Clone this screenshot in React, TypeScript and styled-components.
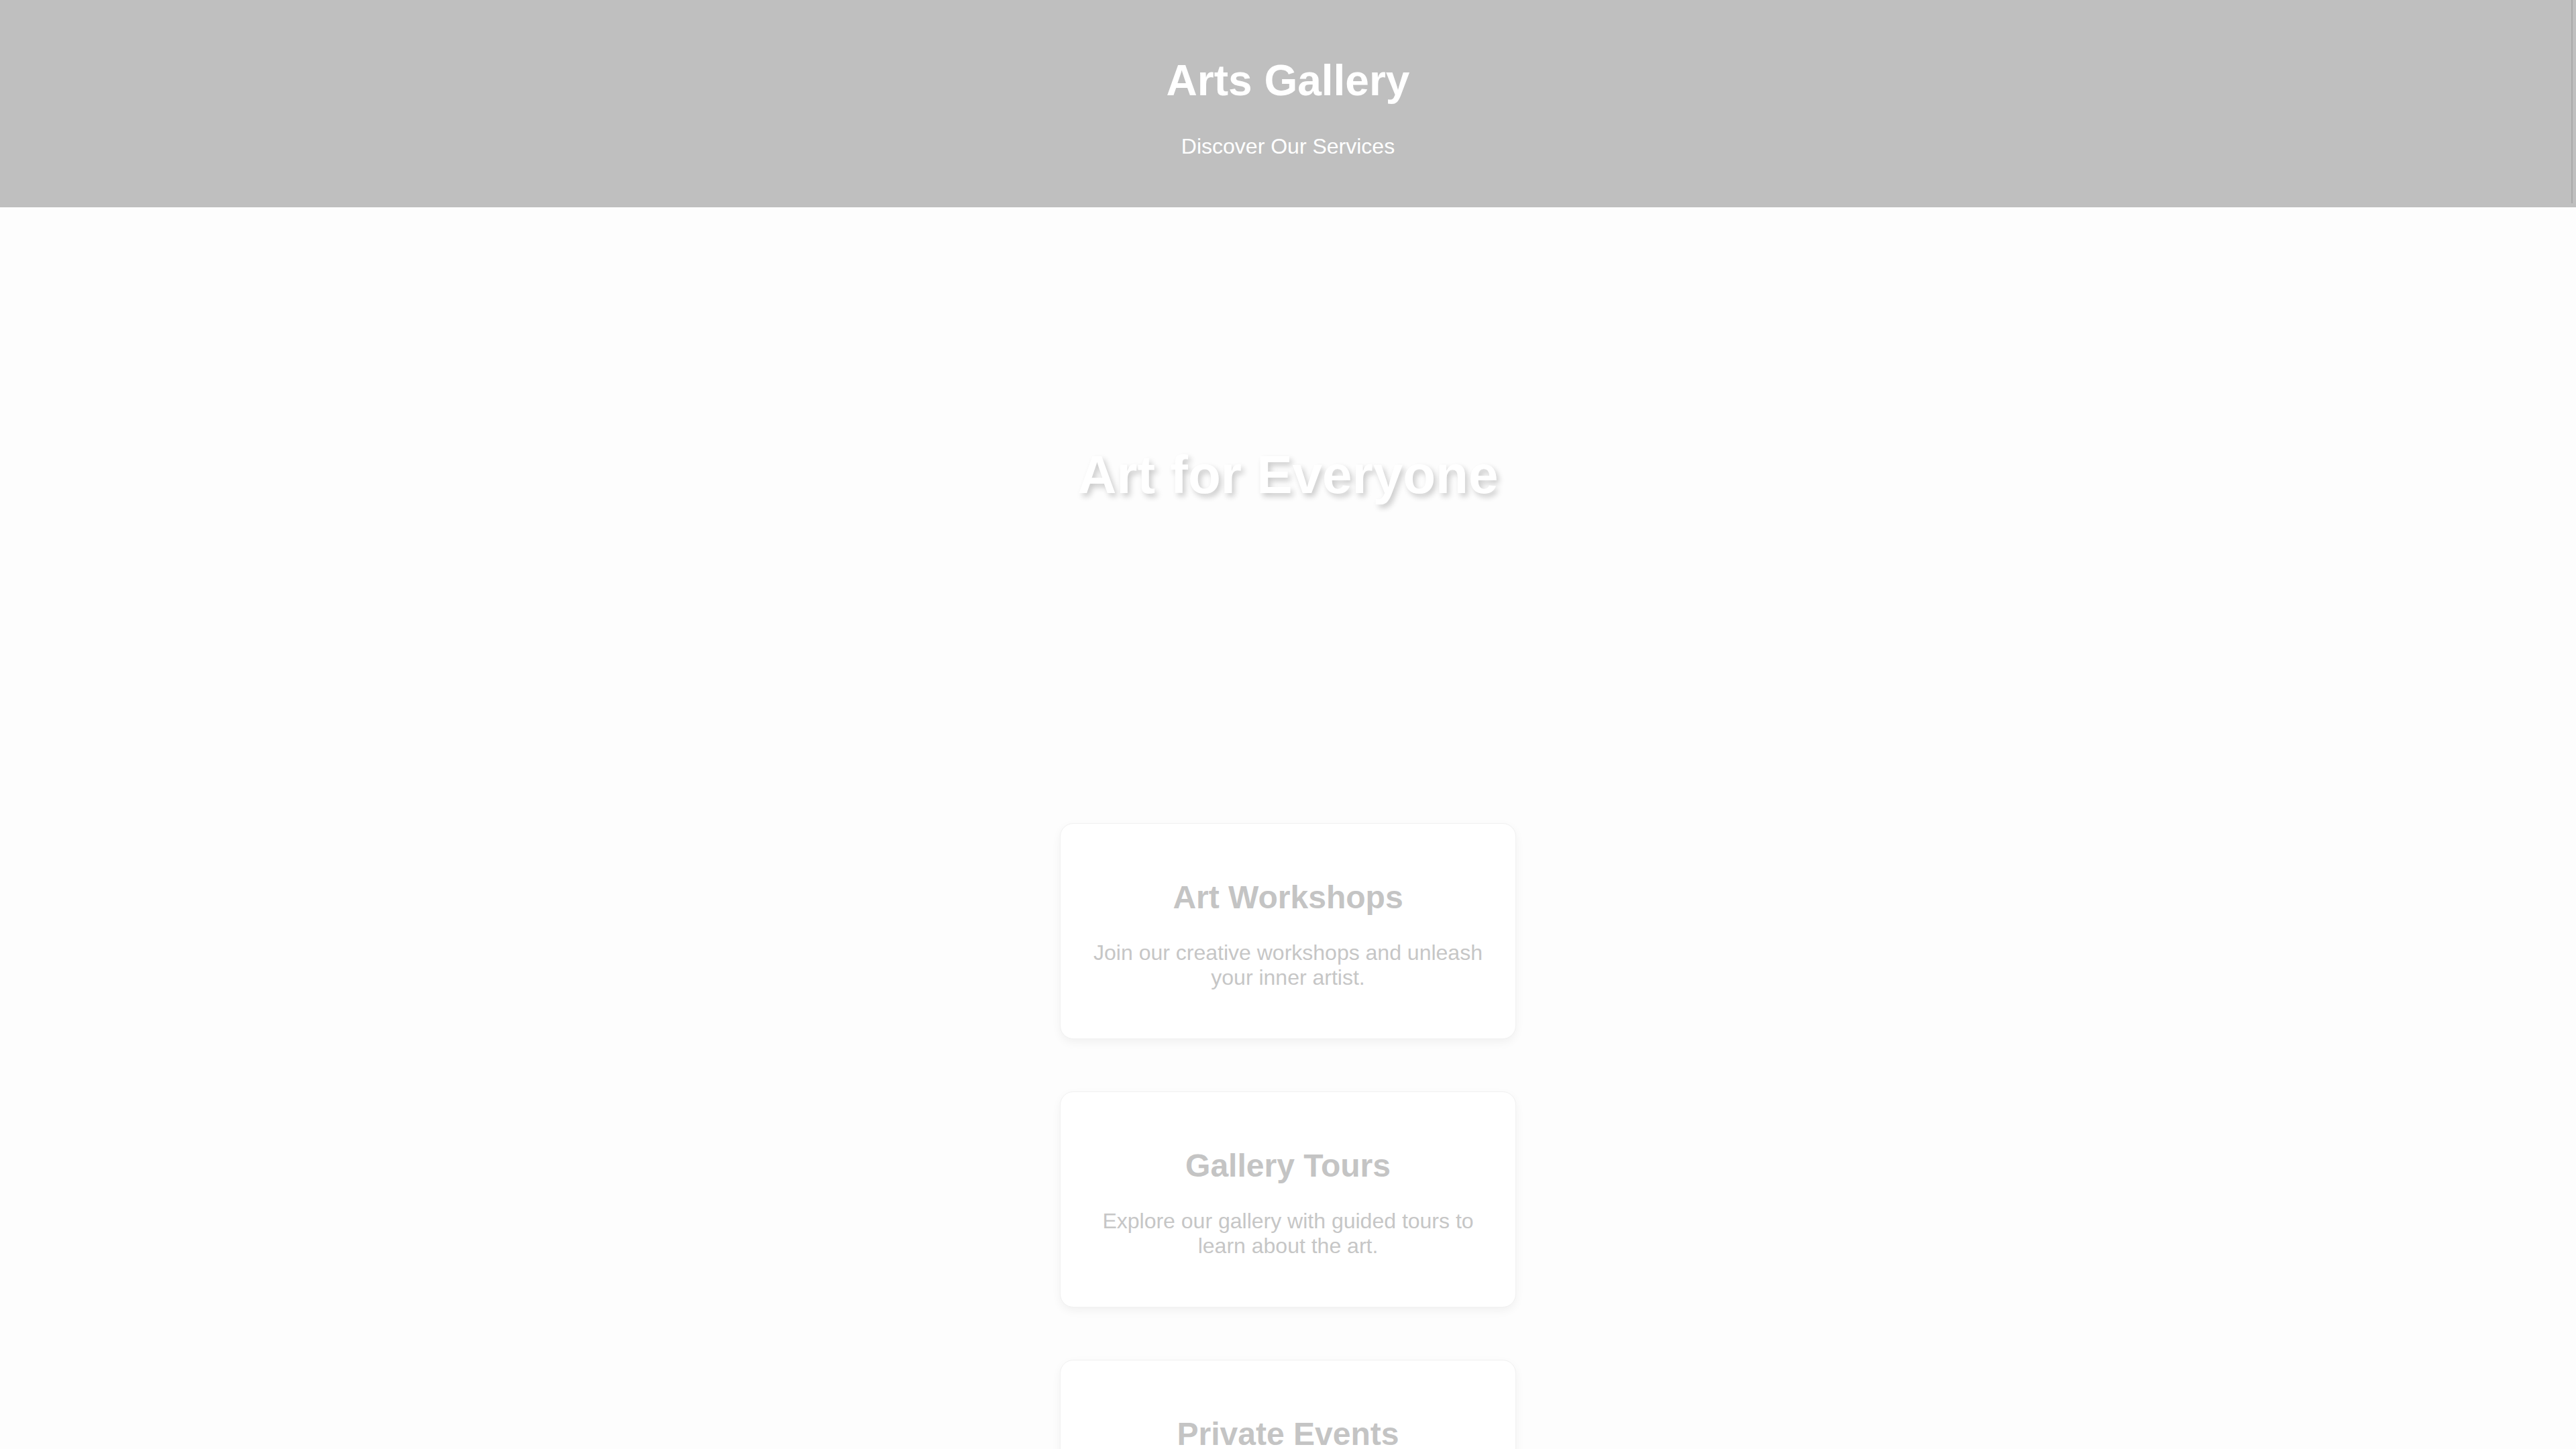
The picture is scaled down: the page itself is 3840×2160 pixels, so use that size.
import React from "react";
import styled, { createGlobalStyle } from "styled-components";

const GlobalStyle = createGlobalStyle`
  html, body {
    margin: 0;
    padding: 0;
    background: #fdfdfd;
    font-family: "Liberation Sans", Arial, sans-serif;
  }
`;

const Header = styled.header`
  position: relative;
  background: #bfbfbf;
  color: #ffffff;
  text-align: center;
  padding: 40px;
  &::after {
    content: "";
    position: absolute;
    top: 0;
    right: 5px;
    width: 2px;
    height: 303px;
    background: #a9a9a9;
  }
`;

const Title = styled.h1`
  font-size: 64px;
  font-weight: 700;
  margin: 42.9px 0;
`;

const Subtitle = styled.p`
  font-size: 32px;
  margin: 32px 0;
`;

const Hero = styled.section`
  height: 798px;
  display: flex;
  align-items: center;
  justify-content: center;
`;

const HeroText = styled.h2`
  margin: 0;
  font-size: 80px;
  font-weight: 700;
  color: #ffffff;
  text-shadow: 4px 5px 8px rgba(0, 0, 0, 0.2);
`;

const Services = styled.section`
  display: flex;
  flex-direction: column;
  align-items: center;
  gap: 78px;
  padding: 120px 0 80px;
`;

const Card = styled.article`
  width: 598px;
  padding: 40px;
  background: #ffffff;
  border: 1px solid #f1f1f1;
  border-radius: 20px;
  box-shadow: 0 5px 14px rgba(0, 0, 0, 0.05);
  text-align: center;
`;

const CardTitle = styled.h3`
  font-size: 48px;
  font-weight: 700;
  color: #c4c4c4;
  margin: 42px 0 37px;
`;

const CardText = styled.p`
  font-size: 32px;
  color: #c6c6c6;
  margin: 32px 0;
`;

const services = [
  { title: "Art Workshops", text: "Join our creative workshops and unleash your inner artist." },
  { title: "Gallery Tours", text: "Explore our gallery with guided tours to learn about the art." },
  { title: "Private Events", text: "Host your private events in our beautiful gallery space." },
];

export default function App() {
  return (
    <>
      <GlobalStyle />
      <Header>
        <Title>Arts Gallery</Title>
        <Subtitle>Discover Our Services</Subtitle>
      </Header>
      <Hero>
        <HeroText>Art for Everyone</HeroText>
      </Hero>
      <Services>
        {services.map((s) => (
          <Card key={s.title}>
            <CardTitle>{s.title}</CardTitle>
            <CardText>{s.text}</CardText>
          </Card>
        ))}
      </Services>
    </>
  );
}
